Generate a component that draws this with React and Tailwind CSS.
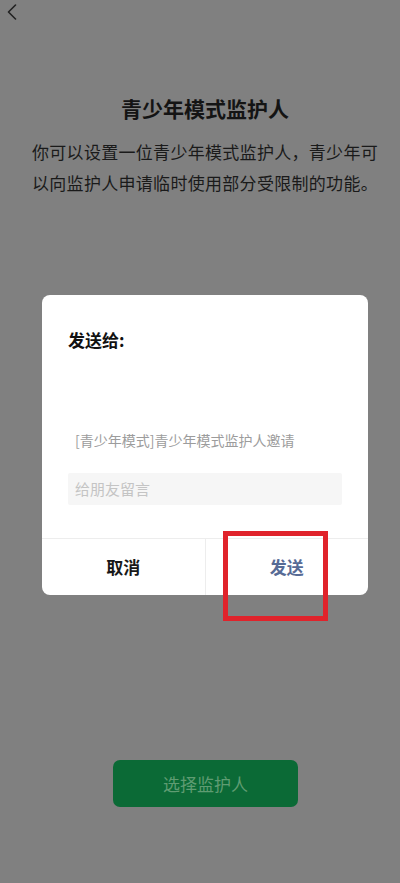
import React from 'react';

const App = () => {
    return (
        <div
            className="relative w-[400px] h-[883px] bg-[#808080] flex flex-col overflow-hidden"
            style={{ fontFamily: '"Noto Sans CJK SC", "Noto Sans", sans-serif' }}
        >
            {/* header */}
            <div className="h-[24px] pl-[7px] pt-[4px]">
                <svg width="10" height="16" viewBox="0 0 10 16" fill="none">
                    <path d="M8.5 1 L1.5 8 L8.5 15" stroke="#222" strokeWidth="1.6" strokeLinecap="round" strokeLinejoin="round" />
                </svg>
            </div>

            <h1 className="mt-[70px] ml-[10px] text-center text-[21px] leading-[28px] font-bold text-[#141414]">
                青少年模式监护人
            </h1>
            <p className="mt-[14px] ml-[32px] w-[350px] text-[17px] leading-[31px] tracking-[0.3px] text-[#1a1a1a]">
                你可以设置一位青少年模式监护人，青少年可以向监护人申请临时使用部分受限制的功能。
            </p>

            {/* dialog */}
            <div className="mt-[97px] ml-[42px] w-[326px] h-[300px] bg-white rounded-[8px] flex flex-col">
                <div className="px-[26px] pt-[35px] flex-1">
                    <div className="text-[17px] leading-[20px] font-bold text-[#111]">发送给:</div>
                    <div className="mt-[80px] pl-[7px] text-[14px] leading-[20px] text-[#9c9c9c]">
                        [青少年模式]青少年模式监护人邀请
                    </div>
                    <div className="mt-[23px] h-[32px] bg-[#f6f6f6] rounded-[2px] pl-[7px] flex items-center text-[15px] text-[#c4c4c4]">
                        给朋友留言
                    </div>
                </div>
                <div className="h-[57px] border-t border-[#ededed] flex">
                    <div className="flex-1 flex items-center justify-center text-[17px] font-bold text-[#181818]">取消</div>
                    <div className="w-px bg-[#ededed]" />
                    <div className="flex-1 flex items-center justify-center text-[17px] font-bold text-[#576b95]">发送</div>
                </div>
            </div>

            {/* bottom button */}
            <div className="mt-[165px] ml-[113px] w-[185px] h-[47px] rounded-[7px] bg-[#0b6a36] flex items-center justify-center text-[17px] text-[#5f9c72]">
                选择监护人
            </div>

            {/* annotation box */}
            <div className="absolute left-[223px] top-[531px] w-[105px] h-[90px] border-[5px] border-[#e0232b]" />
        </div>
    );
};

export default App;
